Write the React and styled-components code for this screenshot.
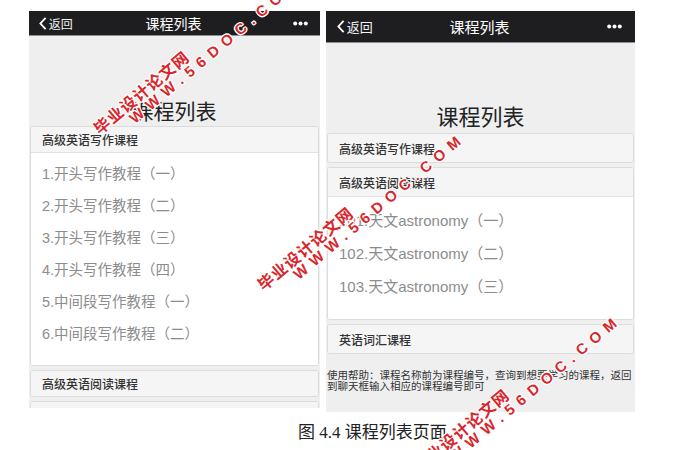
import React from "react";
import styled, { createGlobalStyle } from "styled-components";

const Global = createGlobalStyle`
  html, body { margin: 0; padding: 0; background: #fff; }
  body { font-family: "Liberation Sans", "Noto Sans CJK SC", sans-serif; }
`;

const Page = styled.div`
  position: relative;
  width: 698px;
  height: 450px;
  overflow: hidden;
  background: #fff;
`;

const Row = styled.div`
  display: flex;
  align-items: flex-start;
  gap: 6px;
  padding: 11px 0 0 29px;
`;

const Phone = styled.div`
  width: ${(p) => p.$c.width}px;
  height: ${(p) => p.$c.height}px;
  background: #efeff0;
  display: flex;
  flex-direction: column;
  overflow: hidden;
`;

const Nav = styled.div`
  flex: none;
  height: ${(p) => p.$c.navH}px;
  background: #1e1e21;
  border-bottom: 1px solid #8f8f92;
  display: grid;
  grid-template-columns: 1fr auto 1fr;
  align-items: center;
  padding: 0 ${(p) => p.$c.navPadR}px 0 ${(p) => p.$c.navPadL}px;
  color: #fff;
  font-family: "Noto Sans CJK SC", sans-serif;
`;

const Back = styled.div`
  display: flex;
  align-items: center;
  gap: 2px;
  font-size: ${(p) => p.$c.backFont}px;
  color: #f2f2f2;
`;

const NavTitle = styled.div`
  font-size: ${(p) => p.$c.navFont}px;
  color: #fff;
`;

const More = styled.div`
  justify-self: end;
  display: flex;
  align-items: center;
`;

const Content = styled.div`
  flex: 1;
  padding: ${(p) => p.$c.padTop}px 1px 0;
  display: flex;
  flex-direction: column;
`;

const BigTitle = styled.div`
  text-align: center;
  font-family: "Noto Sans CJK SC", sans-serif;
  font-size: ${(p) => p.$c.titleFont}px;
  line-height: ${(p) => p.$c.titleLH}px;
  color: #222;
  margin-bottom: ${(p) => p.$c.titleGap}px;
`;

const Panels = styled.div`
  display: flex;
  flex-direction: column;
  gap: ${(p) => p.$c.gap}px;
`;

const Panel = styled.div`
  border: 1px solid #dcdcdc;
  border-radius: 3px;
  background: #fff;
  overflow: hidden;
`;

const PanelHeader = styled.div`
  height: ${(p) => p.$c.headerH}px;
  display: flex;
  align-items: center;
  padding: 0 11px;
  background: #f5f5f5;
  font-family: "Noto Sans CJK SC", sans-serif;
  font-size: 12px;
  font-weight: 500;
  color: #333;
  border-bottom: ${(p) => (p.$open ? "1px solid #e2e2e2" : "none")};
`;

const PanelBody = styled.div`
  padding: ${(p) => p.$c.bodyPad};
  background: #fff;
`;

const Item = styled.div`
  font-family: "Liberation Sans", "Noto Sans CJK SC", sans-serif;
  font-size: ${(p) => p.$c.itemFont}px;
  line-height: ${(p) => p.$c.itemLH}px;
  color: #8c8c8c;
  white-space: nowrap;
`;

const Help = styled.div`
  margin-top: 15px;
  font-family: "Noto Sans CJK SC", sans-serif;
  font-size: 10.5px;
  line-height: 11px;
  color: #333;
`;

const Caption = styled.div`
  margin-top: 11px;
  padding-left: 298px;
  font-family: "Liberation Serif", "Noto Sans CJK SC", serif;
  font-size: 17px;
  line-height: 20px;
  color: #222;
`;

const Watermark = styled.div`
  position: absolute;
  left: ${(p) => p.$x}px;
  top: ${(p) => p.$y}px;
  transform: rotate(-40deg);
  transform-origin: 0 0;
  pointer-events: none;
  color: #d9262c;
  font-weight: bold;
  white-space: nowrap;
  text-shadow: 1px 0 0 #fff, -1px 0 0 #fff, 0 1px 0 #fff, 0 -1px 0 #fff,
    1px 1px 0 #fff, -1px -1px 0 #fff, 1px -1px 0 #fff, -1px 1px 0 #fff;
`;

const WmCn = styled.div`
  font-family: "Noto Sans CJK SC", sans-serif;
  font-size: 16px;
  line-height: 16px;
  letter-spacing: 1px;
`;

const WmEn = styled.div`
  font-family: "Liberation Sans", sans-serif;
  font-size: 15px;
  line-height: 16px;
  letter-spacing: 6.5px;
  margin-left: 34px;
`;

const Chevron = ({ h }) => (
  <svg width={h * 0.6} height={h} viewBox="0 0 7 12">
    <path d="M6 0.8 L1.2 6 L6 11.2" fill="none" stroke="#fff" strokeWidth="1.7" />
  </svg>
);

const Dots = ({ w }) => (
  <svg width={w} height={5} viewBox="0 0 15 5">
    <circle cx="2.2" cy="2.5" r="2" fill="#fff" />
    <circle cx="7.5" cy="2.5" r="2" fill="#fff" />
    <circle cx="12.8" cy="2.5" r="2" fill="#fff" />
  </svg>
);

const leftCfg = {
  width: 291,
  height: 397,
  navH: 24,
  navPadL: 10,
  navPadR: 12,
  navFont: 14,
  backFont: 12,
  chev: 13,
  padTop: 60,
  titleFont: 21,
  titleLH: 28,
  titleGap: 2,
  gap: 4,
  headerH: 25,
  bodyPad: "5px 11px 15px",
  itemFont: 14.5,
  itemLH: 32,
};

const rightCfg = {
  width: 309,
  height: 401,
  navH: 31,
  navPadL: 11,
  navPadR: 13,
  navFont: 15,
  backFont: 13,
  chev: 13,
  padTop: 57,
  titleFont: 22,
  titleLH: 30,
  titleGap: 3,
  gap: 4,
  headerH: 28,
  bodyPad: "7px 11px 16px",
  itemFont: 15,
  itemLH: 33,
};

const PhoneScreen = ({ c, children, footer }) => (
  <Phone $c={c}>
    <Nav $c={c}>
      <Back $c={c}>
        <Chevron h={c.chev} />
        返回
      </Back>
      <NavTitle $c={c}>课程列表</NavTitle>
      <More>
        <Dots w={15} />
      </More>
    </Nav>
    <Content $c={c}>
      <BigTitle $c={c}>课程列表</BigTitle>
      <Panels $c={c}>{children}</Panels>
      {footer}
    </Content>
  </Phone>
);

const writing = [
  "1.开头写作教程（一）",
  "2.开头写作教程（二）",
  "3.开头写作教程（三）",
  "4.开头写作教程（四）",
  "5.中间段写作教程（一）",
  "6.中间段写作教程（二）",
];

const reading = [
  "101.天文astronomy（一）",
  "102.天文astronomy（二）",
  "103.天文astronomy（三）",
];

const WM = ({ x, y }) => (
  <Watermark $x={x} $y={y}>
    <WmCn>毕业设计论文网</WmCn>
    <WmEn>WWW.56DOC.COM</WmEn>
  </Watermark>
);

export default function App() {
  return (
    <Page>
      <Global />
      <Row>
        <PhoneScreen c={leftCfg}>
          <Panel>
            <PanelHeader $c={leftCfg} $open>高级英语写作课程</PanelHeader>
            <PanelBody $c={leftCfg}>
              {writing.map((t) => (
                <Item key={t} $c={leftCfg}>{t}</Item>
              ))}
            </PanelBody>
          </Panel>
          <Panel>
            <PanelHeader $c={leftCfg}>高级英语阅读课程</PanelHeader>
          </Panel>
          <Panel>
            <PanelHeader $c={leftCfg}>英语词汇课程</PanelHeader>
          </Panel>
        </PhoneScreen>
        <PhoneScreen
          c={rightCfg}
          footer={
            <Help>
              使用帮助：课程名称前为课程编号，查询到想要学习的课程，返回到聊天框输入相应的课程编号即可
            </Help>
          }
        >
          <Panel>
            <PanelHeader $c={rightCfg}>高级英语写作课程</PanelHeader>
          </Panel>
          <Panel>
            <PanelHeader $c={rightCfg} $open>高级英语阅读课程</PanelHeader>
            <PanelBody $c={rightCfg}>
              {reading.map((t) => (
                <Item key={t} $c={rightCfg}>{t}</Item>
              ))}
            </PanelBody>
          </Panel>
          <Panel>
            <PanelHeader $c={rightCfg}>英语词汇课程</PanelHeader>
          </Panel>
        </PhoneScreen>
      </Row>
      <Caption>图 4.4 课程列表页面</Caption>
      <WM x={90} y={124} />
      <WM x={254} y={280} />
      <WM x={410} y={462} />
    </Page>
  );
}
